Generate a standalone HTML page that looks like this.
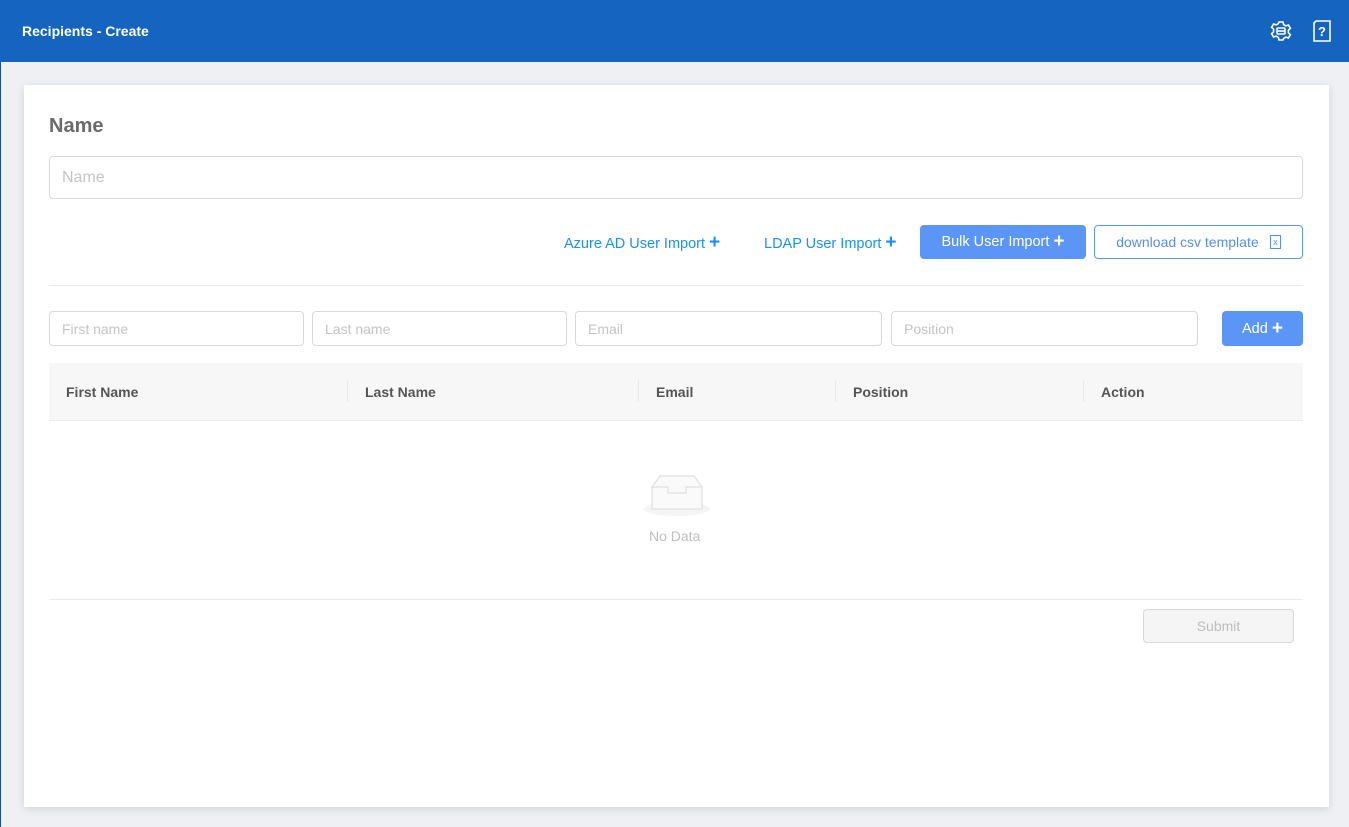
<!DOCTYPE html>
<html><head><meta charset="utf-8"><style>
*{box-sizing:border-box;margin:0;padding:0}
body{width:1349px;height:827px;background:#eef0f4;font-family:"Liberation Sans",sans-serif;position:relative;overflow:hidden}
.hdr{position:absolute;left:0;top:0;width:1349px;height:62px;background:#1565c0;color:#fff}
.hdr .t{position:absolute;left:22px;top:23px;font-size:14px;font-weight:bold}
.card{position:absolute;left:24px;top:85px;width:1305px;height:722px;background:#fff;box-shadow:0 2px 8px rgba(0,0,0,.12)}
.a{position:absolute}
.inp{position:absolute;border:1px solid #d9d9d9;border-radius:4px;color:#c4c4c4;font-size:14px;padding-left:12px;display:flex;align-items:center}
.lnk{position:absolute;color:#1890ff;font-size:14.5px;top:147px}
.th{position:absolute;top:299px;font-size:14px;font-weight:bold;color:#555}
.sep{position:absolute;top:295px;width:1px;height:22px;background:#e8e8e8}
</style></head><body>
<div class="a" style="left:0;top:0;width:1px;height:827px;background:#1a4aa0"></div>
<div class="hdr"><div class="t">Recipients - Create</div>
<svg class="a" style="left:1270px;top:20px" width="22" height="22" viewBox="0 0 22 22" fill="none" stroke="#fff" stroke-width="1.6"><path d="M9 2h4l.6 2.6 2.3 1.3 2.5-.9 2 3.4-2 1.8v2.6l2 1.8-2 3.4-2.5-.9-2.3 1.3L13 20H9l-.6-2.6-2.3-1.3-2.5.9-2-3.4 2-1.8V9.2l-2-1.8 2-3.4 2.5.9 2.3-1.3z"/><rect x="7" y="8" width="8" height="6" rx="1"/><path d="M7 11h8"/></svg>
<svg class="a" style="left:1312px;top:20px" width="20" height="22" viewBox="0 0 20 22" fill="none" stroke="#fff" stroke-width="1.6"><path d="M4 1h14v20H2V3z"/><text x="10" y="16" font-size="13" font-weight="bold" fill="#fff" stroke="none" text-anchor="middle" font-family="Liberation Sans">?</text></svg>
</div>
<div class="card">
<div class="a" style="left:25px;top:30px;font-size:20px;font-weight:bold;color:#6b6b6b">Name</div>
<div class="inp" style="left:25px;top:71px;width:1254px;height:43px;font-size:16px">Name</div>
<div class="lnk" style="left:540px">Azure AD User Import <b style="font-size:19px">+</b></div>
<div class="lnk" style="left:740px">LDAP User Import <b style="font-size:19px">+</b></div>
<div class="a" style="left:896px;top:140px;width:166px;height:34px;background:#5b95f5;border-radius:4px;color:#fff;font-size:14.5px;display:flex;align-items:center;justify-content:center">Bulk User Import&nbsp;<b style="font-size:19px">+</b></div>
<div class="a" style="left:1070px;top:140px;width:209px;height:34px;border:1px solid #5b95f5;border-radius:4px;color:#5b8ee8;font-size:14px;display:flex;align-items:center;justify-content:center">download csv template&nbsp;&nbsp;&nbsp;<span style="border:1px solid #5b8ee8;font-size:9px;padding:1px 2px">x</span></div>
<div class="a" style="left:25px;top:200px;width:1254px;height:1px;background:#eaeaea"></div>
<div class="inp" style="left:25px;top:226px;width:255px;height:35px">First name</div>
<div class="inp" style="left:288px;top:226px;width:255px;height:35px">Last name</div>
<div class="inp" style="left:551px;top:226px;width:307px;height:35px">Email</div>
<div class="inp" style="left:867px;top:226px;width:307px;height:35px">Position</div>
<div class="a" style="left:1198px;top:226px;width:81px;height:35px;background:#5b95f5;border-radius:4px;color:#fff;font-size:14.5px;display:flex;align-items:center;justify-content:center">Add&nbsp;<b style="font-size:19px">+</b></div>
<div class="a" style="left:25px;top:278px;width:1254px;height:58px;background:#f7f7f7;border-bottom:1px solid #ebebeb"></div>
<div class="th" style="left:42px">First Name</div>
<div class="sep" style="left:323px"></div><div class="th" style="left:341px">Last Name</div>
<div class="sep" style="left:614px"></div><div class="th" style="left:632px">Email</div>
<div class="sep" style="left:811px"></div><div class="th" style="left:829px">Position</div>
<div class="sep" style="left:1059px"></div><div class="th" style="left:1077px">Action</div>
<svg class="a" style="left:620px;top:386px" width="66" height="48" viewBox="0 0 66 48"><ellipse cx="33" cy="38" rx="33" ry="7" fill="#f5f5f5"/><path d="M8 16l8-11h34l8 11v22H8z" fill="#fafafa" stroke="#d9d9d9"/><path d="M8 16h16v6h18v-6h16" fill="none" stroke="#d9d9d9"/></svg>
<div class="a" style="left:625px;top:443px;font-size:14px;color:#bfbfbf">No Data</div>
<div class="a" style="left:25px;top:514px;width:1254px;height:1px;background:#eaeaea"></div>
<div class="a" style="left:1119px;top:524px;width:151px;height:34px;background:#f5f5f5;border:1px solid #d9d9d9;border-radius:4px;color:#bdbdbd;font-size:14px;display:flex;align-items:center;justify-content:center">Submit</div>
</div>
</body></html>
